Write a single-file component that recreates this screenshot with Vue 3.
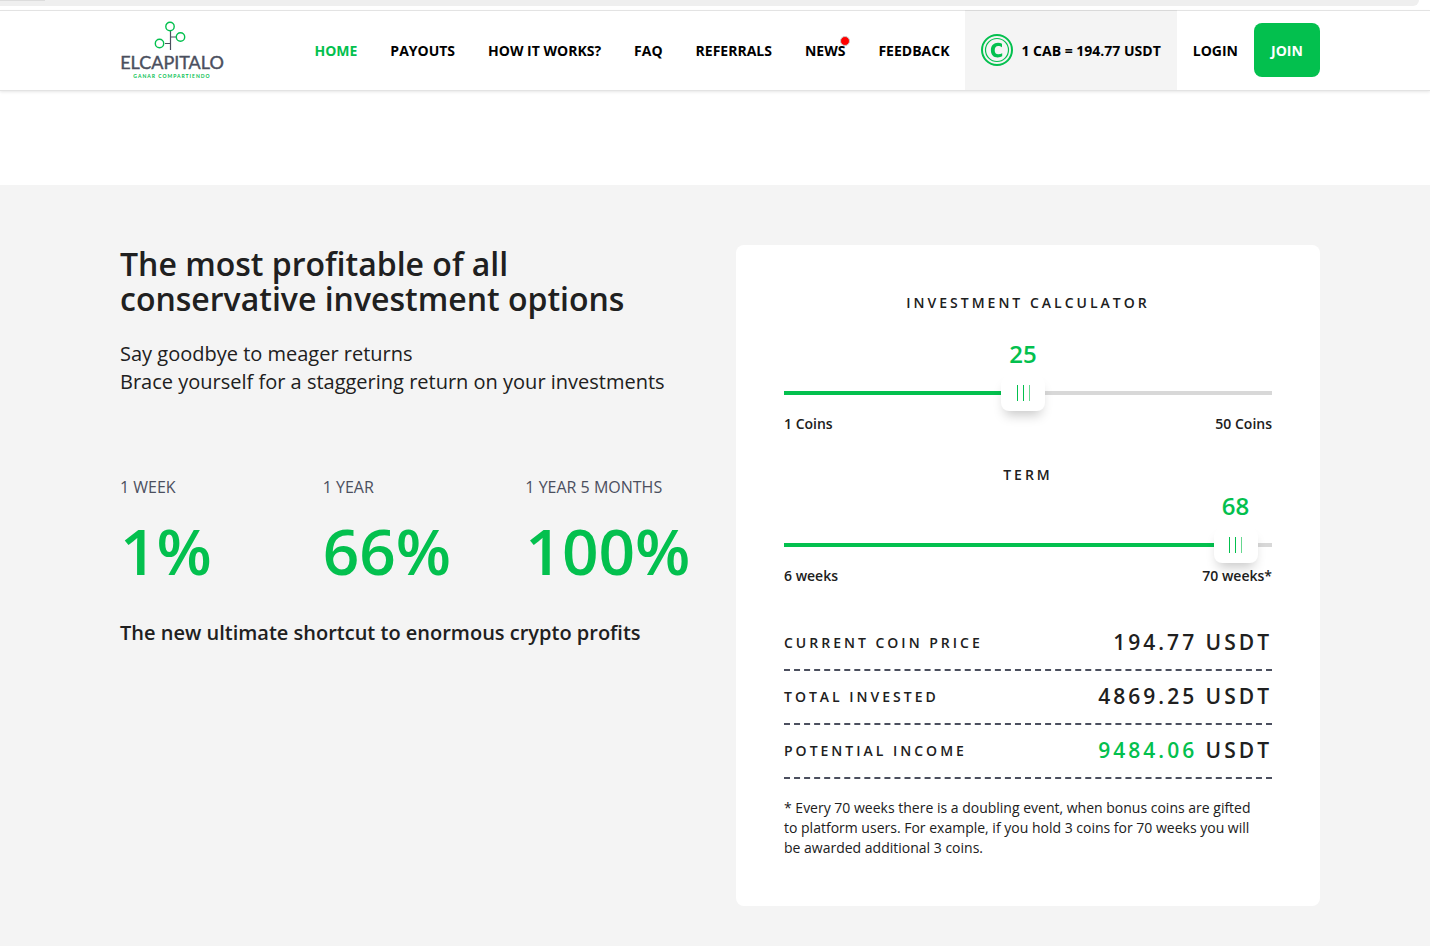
<script setup>
import { reactive } from 'vue'

const links = [
  { label: 'HOME', active: true },
  { label: 'PAYOUTS' },
  { label: 'HOW IT WORKS?' },
  { label: 'FAQ' },
  { label: 'REFERRALS' },
  { label: 'NEWS', dot: true },
  { label: 'FEEDBACK' },
]

const stats = [
  { period: '1 WEEK', value: '1%' },
  { period: '1 YEAR', value: '66%' },
  { period: '1 YEAR 5 MONTHS', value: '100%' },
]

const sliders = reactive([
  { id: 'coins', title: 'INVESTMENT CALCULATOR', min: 1, max: 50, value: 25, from: '1 Coins', to: '50 Coins' },
  { id: 'term', title: 'TERM', min: 6, max: 73, value: 68, from: '6 weeks', to: '70 weeks*' },
])

const results = [
  { label: 'CURRENT COIN PRICE', amount: '194.77' },
  { label: 'TOTAL INVESTED', amount: '4869.25' },
  { label: 'POTENTIAL INCOME', amount: '9484.06', green: true },
]

const percent = (s) => ((s.value - s.min) / (s.max - s.min)) * 100 + '%'
</script>

<template>
  <div class="page">
    <div class="strip"><div class="strip-bar"><span class="strip-tab"></span></div></div>
    <header class="header">
      <a href="#" class="logo" aria-label="Elcapitalo">
        <svg width="106" height="60" viewBox="0 0 106 60">
          <g fill="none" stroke="#4b4f5e" stroke-width="1.2">
            <path d="M50.5 11V30M50.5 17H56M50.5 23.500H45" />
          </g>
          <g fill="none" stroke="#03c04e" stroke-width="1.4">
            <circle cx="50" cy="6.500" r="4.200" />
            <circle cx="60.500" cy="17" r="4.200" />
            <circle cx="39.500" cy="23.500" r="4.200" />
          </g>
          <text class="logo-name" x="52" y="49" text-anchor="middle">ELCAPITALO</text>
          <text class="logo-tag" x="52" y="58" text-anchor="middle">GANAR COMPARTIENDO</text>
        </svg>
      </a>
      <nav class="nav">
        <div class="links">
          <a v-for="l in links" :key="l.label" href="#" class="link" :class="{ active: l.active }">
            <span class="link-text">{{ l.label }}<i v-if="l.dot" class="dot"></i></span>
          </a>
        </div>
        <div class="rate">
          <svg width="32" height="32" viewBox="0 0 32 32">
            <circle cx="16" cy="16" r="15" fill="none" stroke="#03c04e" stroke-width="2" />
            <circle cx="16" cy="16" r="11.500" fill="none" stroke="#03c04e" stroke-width="1.200" />
            <path d="M21 9.800V13.200C19.800 12.300 18.600 11.900 17.200 11.900C14.800 11.900 13.700 13.500 13.700 16.200C13.700 18.900 14.900 20.300 17.200 20.300C18.700 20.300 20 19.900 21.200 19.200V22.300C19.900 23 18.500 23.400 16.800 23.400C12.400 23.400 9.900 20.800 9.900 16.200C9.900 11.600 12.600 8.800 17 8.800C18.600 8.800 19.900 9.100 21 9.800Z" fill="#03c04e" />
          </svg>
          <span>1 CAB = 194.77 USDT</span>
        </div>
        <a href="#" class="link">LOGIN</a>
        <button type="button" class="join">JOIN</button>
      </nav>
    </header>

    <main class="hero">
      <section class="intro">
        <h1>The most profitable of all conservative investment options</h1>
        <p class="lead">Say goodbye to meager returns<br />Brace yourself for a staggering return on your investments</p>
        <dl class="stats">
          <div v-for="s in stats" :key="s.period">
            <dt>{{ s.period }}</dt>
            <dd>{{ s.value }}</dd>
          </div>
        </dl>
        <p class="closing">The new ultimate shortcut to enormous crypto profits</p>
      </section>

      <section class="card">
        <div v-for="s in sliders" :key="s.id" class="field" :class="s.id">
          <label :for="s.id">{{ s.title }}</label>
          <div class="slider">
            <output :for="s.id" :style="{ left: percent(s) }">{{ s.value }}</output>
            <div class="track"><div class="fill" :style="{ width: percent(s) }"></div></div>
            <input :id="s.id" v-model.number="s.value" type="range" :min="s.min" :max="s.max" />
          </div>
          <div class="limits"><span>{{ s.from }}</span><span>{{ s.to }}</span></div>
        </div>

        <dl class="results">
          <div v-for="r in results" :key="r.label">
            <dt>{{ r.label }}</dt>
            <dd><span :class="{ green: r.green }">{{ r.amount }}</span> USDT</dd>
          </div>
        </dl>
        <p class="note">* Every 70 weeks there is a doubling event, when bonus coins are gifted to platform users. For example, if you hold 3 coins for 70 weeks you will be awarded additional 3 coins.</p>
      </section>
    </main>
  </div>
</template>

<style>
body {
  background: #f4f4f4;
}
</style>

<style scoped>
.page {
  font-family: "Open Sans", sans-serif;
  font-size: 14px;
  color: #202020;
}
.page * {
  box-sizing: border-box;
}
h1, p, dl, dd {
  margin: 0;
}
a {
  color: inherit;
  text-decoration: none;
}
.strip {
  height: 10px;
  padding-right: 11px;
  background: #fff;
}
.strip-bar {
  height: 6px;
  background: #efefef;
  border-bottom-right-radius: 6px;
}
.strip-tab {
  display: block;
  width: 45px;
  height: 1px;
  background: #dcdcdc;
}
.header {
  position: relative;
  display: flex;
  align-items: stretch;
  justify-content: space-between;
  height: 80px;
  padding: 0 110px 0 120px;
  background: #fff;
  box-shadow: 0 1px 0 #e3e3e3, 0 2px 3px rgba(0, 0, 0, 0.1);
}
.header::before {
  content: "";
  position: absolute;
  top: 0;
  left: 0;
  right: 0;
  height: 1px;
  background: rgba(0, 0, 0, 0.11);
}
.logo {
  align-self: center;
  height: 60px;
}
.logo svg {
  display: block;
}
.logo-name {
  font: 400 18px Lato, sans-serif;
  fill: #4b4f5e;
  stroke: #4b4f5e;
  stroke-width: 0.4;
}
.logo-tag {
  font: 700 5px Lato, sans-serif;
  letter-spacing: 1px;
  fill: #03c04e;
}
.nav {
  display: flex;
  align-items: stretch;
  font-weight: 700;
  color: #000;
  white-space: nowrap;
}
.links {
  display: flex;
  gap: 1px;
}
.link {
  display: flex;
  align-items: center;
  padding: 0 16px;
}
.active {
  color: #03c04e;
}
.link-text {
  position: relative;
}
.dot {
  position: absolute;
  top: -5px;
  right: -5px;
  width: 10px;
  height: 10px;
  border: 1px solid #c9c9c9;
  border-radius: 50%;
  background: #f00;
}
.rate {
  display: flex;
  align-items: center;
  gap: 8px;
  padding: 0 16px;
  background: #f4f4f4;
}
.join {
  align-self: center;
  min-width: 66px;
  height: 54px;
  padding: 0 16px;
  border: 0;
  border-radius: 8px;
  background: #03c04e;
  color: #fff;
  font: inherit;
}
.hero {
  display: grid;
  grid-template-columns: 1fr 1fr;
  gap: 32px;
  align-items: start;
  padding: 60px 110px 40px 120px;
  border-top: 95px solid #fff;
  background: #f4f4f4;
}
h1 {
  padding-top: 1px;
  font-size: 32px;
  line-height: 35px;
  font-weight: 600;
}
.lead {
  margin-top: 24px;
  font-size: 20px;
  line-height: 28px;
}
.stats {
  display: grid;
  grid-template-columns: repeat(3, 1fr);
  margin: 80px -24px 0 0;
}
.stats dt {
  font-size: 16px;
  line-height: 22px;
  color: #4b4f5e;
}
.stats dd {
  margin-top: 18px;
  font-size: 64px;
  line-height: 70px;
  font-weight: 600;
  color: #03c04e;
}
.closing {
  margin-top: 33px;
  font-size: 20px;
  line-height: 28px;
  font-weight: 600;
}
.card {
  padding: 48px;
  border-radius: 8px;
  background: #fff;
}
.field label {
  display: block;
  line-height: 20px;
  font-weight: 600;
  letter-spacing: 3px;
  text-align: center;
}
.slider {
  position: relative;
  height: 98px;
  padding-top: 78px;
}
.term .slider {
  height: 78px;
  padding-top: 58px;
}
.term {
  margin-top: 31px;
}
.slider output {
  position: absolute;
  bottom: 40px;
  transform: translateX(-50%);
  font-size: 24px;
  line-height: 34px;
  font-weight: 600;
  color: #03c04e;
}
.track {
  height: 4px;
  background: #d8d8d8;
}
.fill {
  height: 4px;
  background: #03c04e;
}
.slider input {
  appearance: none;
  position: absolute;
  left: -22px;
  bottom: 0;
  width: calc(100% + 44px);
  height: 36px;
  margin: 0;
  background: transparent;
}
.slider input::-webkit-slider-thumb {
  appearance: none;
  width: 44px;
  height: 36px;
  border-radius: 8px;
  background:
    linear-gradient(90deg, #03c04e 1px, transparent 1px 6px, #03c04e 6px 7px, transparent 7px 12px, #66d78f 12px) center / 13px 16px no-repeat,
    #fff;
  box-shadow: 0 8px 12px -4px rgba(0, 0, 0, 0.22);
}
.limits {
  display: flex;
  justify-content: space-between;
  margin-top: 3px;
  line-height: 20px;
  font-weight: 600;
}
.results {
  margin-top: 31px;
}
.results div {
  display: flex;
  align-items: center;
  justify-content: space-between;
  height: 54px;
  padding-bottom: 2px;
  border-bottom: 2px dashed #4b4f5e;
}
.results dt {
  font-weight: 600;
  letter-spacing: 3px;
}
.results dd {
  font-size: 21px;
  font-weight: 600;
  letter-spacing: 3px;
}
.green {
  color: #03c04e;
}
.note {
  margin-top: 19px;
  padding-right: 8px;
  line-height: 20px;
}
</style>
